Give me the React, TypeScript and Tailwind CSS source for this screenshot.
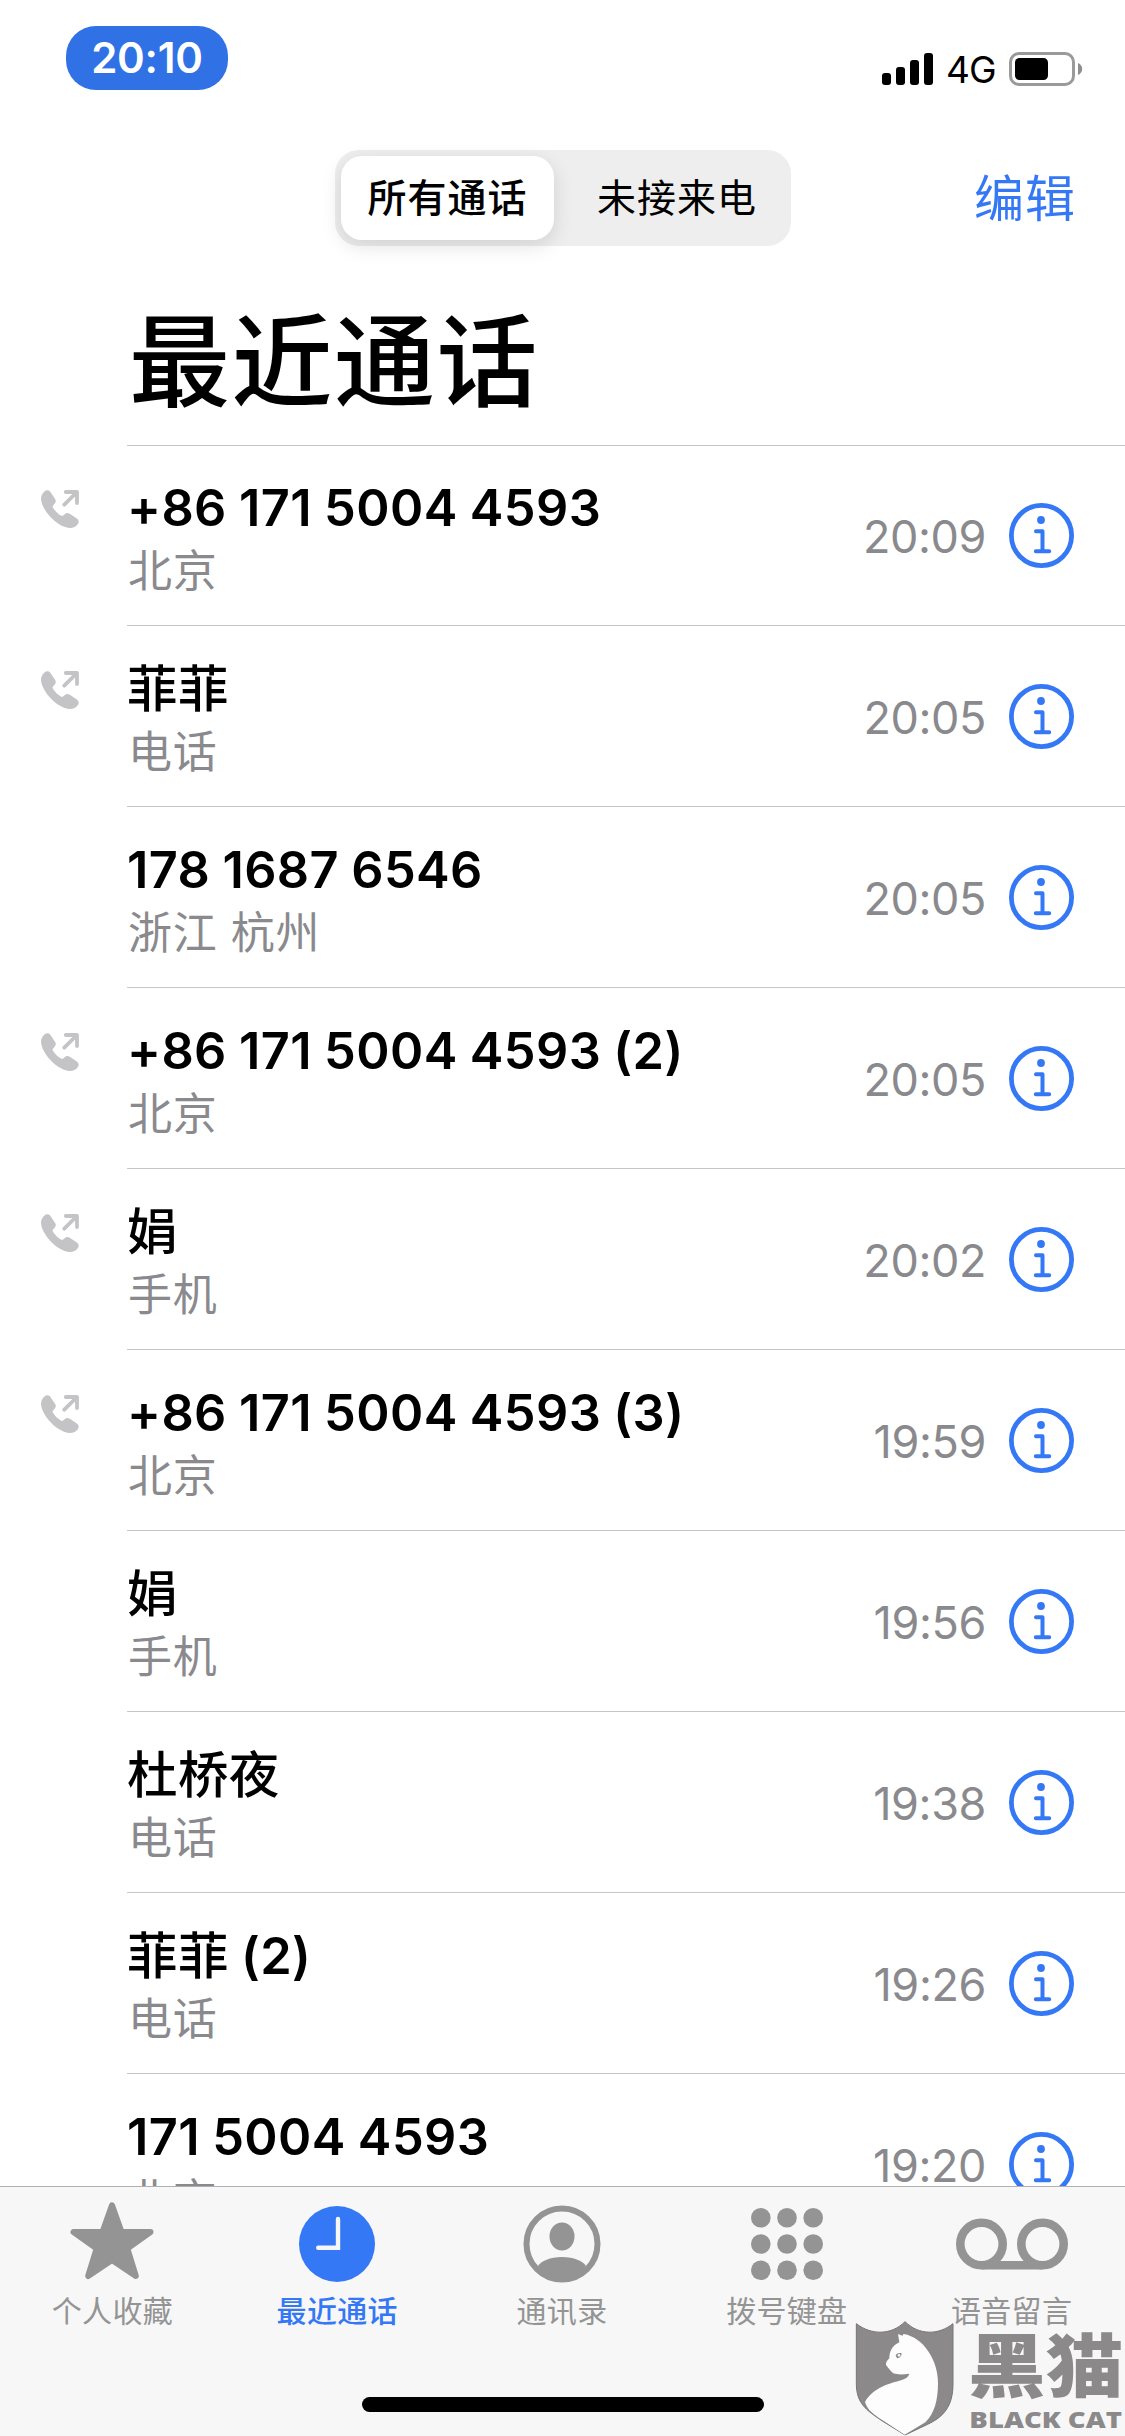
import React from 'react';
import { clsx } from 'clsx';

interface Call {
  id: number;
  name: string;
  count?: number;
  label: string;
  time: string;
  outgoing?: boolean;
}

const calls: Call[] = [
  { id: 1, name: '+86 171 5004 4593', label: '北京', time: '20:09', outgoing: true },
  { id: 2, name: '菲菲', label: '电话', time: '20:05', outgoing: true },
  { id: 3, name: '178 1687 6546', label: '浙江 杭州', time: '20:05' },
  { id: 4, name: '+86 171 5004 4593', count: 2, label: '北京', time: '20:05', outgoing: true },
  { id: 5, name: '娟', label: '手机', time: '20:02', outgoing: true },
  { id: 6, name: '+86 171 5004 4593', count: 3, label: '北京', time: '19:59', outgoing: true },
  { id: 7, name: '娟', label: '手机', time: '19:56' },
  { id: 8, name: '杜桥夜', label: '电话', time: '19:38' },
  { id: 9, name: '菲菲', count: 2, label: '电话', time: '19:26' },
  { id: 10, name: '171 5004 4593', label: '北京', time: '19:20' },
];

function StatusBar() {
  return (
    <div className="flex h-[150px] shrink-0 items-start justify-between pt-[26px] pr-[42px] pl-[66px]">
      <div className="flex h-16 w-[162px] items-center justify-center rounded-[30px] bg-[#3072e6] text-[42px] font-semibold leading-none tracking-[-0.200px] text-white">
        20:10
      </div>
      <div className="flex items-start pt-[26px]">
        <svg width="52" height="34" viewBox="0 0 52 34" className="mr-[12px]">
          <rect x="0" y="21" width="9" height="12" rx="3" />
          <rect x="14" y="15" width="9" height="18" rx="3" />
          <rect x="28" y="8" width="9" height="25" rx="3" />
          <rect x="42" y="1" width="9" height="32" rx="3" />
        </svg>
        <span className="mr-3 w-[51px] text-[37px] leading-9 tracking-tight">4G</span>
        <svg width="74" height="34" viewBox="0 0 74 34">
          <rect x="1.500" y="1.500" width="63" height="31" rx="8.500" fill="none" stroke="#9a9a9a" strokeWidth="3" />
          <rect x="6" y="6" width="33" height="22" rx="4.500" />
          <path d="M69 11c2.6 1 4.200 3.400 4.200 6s-1.600 5-4.200 6z" fill="#8e8e8e" />
        </svg>
      </div>
    </div>
  );
}

function NavBar() {
  return (
    <div className="flex h-24 shrink-0 items-center pr-[49px] pl-[335px]">
      <div className="flex h-24 w-[456px] rounded-[24px] bg-[#eeeeee] p-1.5 text-[39px] tracking-[1px]">
        <div className="flex w-[213px] items-center justify-center rounded-[21px] bg-white font-medium shadow-[0_6px_20px_rgba(0,0,0,0.12)]">
          所有通话
        </div>
        <div className="flex flex-1 items-center justify-center pl-[15px]">未接来电</div>
      </div>
      <div className="ml-auto pt-0.5 text-[50px] tracking-[1px] text-[#3478f6]">编辑</div>
    </div>
  );
}

function OutgoingIcon() {
  return (
    <svg width="38" height="38" viewBox="0 0 38 38" fill="#c4c4c6">
      <path d="M3.500 1.500C5.500-.3 8 0 9.600 2.200l4.400 6.600c1.300 2 1 3.400-.6 5.200l-1.300 1.500c-.7.8-.6 1.400-.1 2.200 1.800 3 5 6.200 7.900 7.900.9.500 1.500.5 2.200-.1l1.500-1.300c1.800-1.600 3.200-1.700 5.200-.4l6.300 4.200c2.500 1.700 3.400 3.700 1.800 6C35 37 31.500 38.200 28 37.900 15 36.500.5 19.500 0 9 0 6 1.200 3.500 3.500 1.500z" />
      <path d="M24.800 2H36v11M35.500 2.500 23.300 14.700" fill="none" stroke="#c4c4c6" strokeWidth="3.800" strokeLinecap="round" strokeLinejoin="round" />
    </svg>
  );
}

function InfoIcon() {
  return (
    <svg width="65" height="65" viewBox="0 0 65 65" fill="none" stroke="#3478f6">
      <circle cx="32.500" cy="32.500" r="30.100" strokeWidth="4.800" />
      <circle cx="32" cy="17" r="3.900" fill="#3478f6" stroke="none" />
      <path d="M27 28.300h6.500v20M26.800 48.300h13.400" strokeWidth="4" strokeLinecap="round" strokeLinejoin="round" />
    </svg>
  );
}

function CallRow({ call }: { call: Call }) {
  const isNumber = /^[+\d]/.test(call.name);

  return (
    <div className="flex h-[181px] shrink-0">
      <div className="w-[127px] shrink-0 pt-[45px] pl-[41px]">{call.outgoing && <OutgoingIcon />}</div>
      <div className="flex flex-1 border-b border-[#c6c6c8]">
        <div className="flex-1 pt-[32px]">
          <div className="h-[63px] text-[50.500px] font-semibold leading-[62px] tracking-[0.400px] whitespace-nowrap [word-spacing:-1px]">
            <span className={isNumber ? 'font-semibold' : 'font-medium'}>{call.name}</span>
            {call.count && ` (${call.count})`}
          </div>
          <div className="h-[62px] pl-px text-[44px] leading-[62px] tracking-[0.800px] text-[#8a8a8e]">{call.label}</div>
        </div>
        <div className="flex h-[181px] items-center pr-[51px]">
          <span className="mr-[23px] pt-[2px] text-[45px] leading-none tracking-[-0.400px] text-[#8a8a8e]">{call.time}</span>
          <InfoIcon />
        </div>
      </div>
    </div>
  );
}

const tabs = [
  {
    label: '个人收藏',
    icon: (
      <path d="M56 18.300 65.500 45H94.500L71.300 61.500 79.800 89 56 73 32.200 89 40.700 61.500 17.500 45H46.500z" fill="currentColor" stroke="currentColor" strokeWidth="6" strokeLinejoin="round" />
    ),
  },
  {
    label: '最近通话',
    active: true,
    icon: (
      <>
        <circle cx="56" cy="57" r="38" fill="currentColor" />
        <path d="M57 32v28.800H37.200" fill="none" stroke="#f7f7f7" strokeWidth="4.400" strokeLinecap="round" />
      </>
    ),
  },
  {
    label: '通讯录',
    icon: (
      <>
        <circle cx="56" cy="57" r="35.500" fill="none" stroke="currentColor" strokeWidth="6" />
        <ellipse cx="56" cy="49.500" rx="12.500" ry="14" fill="currentColor" />
        <path d="M32 79c3-5 12-9 24-9s21 4 24 9c-5 8-14 14-24 14s-19-6-24-14z" fill="currentColor" />
      </>
    ),
  },
  {
    label: '拨号键盘',
    icon: [30.700, 57, 83.300].map((y) =>
      [29.800, 56, 82.200].map((x) => <circle key={`${x}-${y}`} cx={x} cy={y} r="9.800" fill="currentColor" />)
    ),
  },
  {
    label: '语音留言',
    icon: (
      <g fill="none" stroke="currentColor" strokeWidth="8.600">
        <circle cx="25.500" cy="57" r="21.200" />
        <circle cx="86.500" cy="57" r="21.200" />
        <path d="M25.500 78.200h61" />
      </g>
    ),
  },
];

function TabBar() {
  return (
    <div className="flex h-[250px] shrink-0 flex-col border-t border-[#b1b1b3] bg-[#f7f7f8]">
      <div className="flex pr-[1px]">
        {tabs.map((tab) => (
          <div
            key={tab.label}
            className={clsx('flex flex-1 flex-col items-center', tab.active ? 'font-medium text-[#3478f6]' : 'text-[#949494]')}
          >
            <svg width="112" height="104" viewBox="0 0 112 104">{tab.icon}</svg>
            <span className="text-[30px] leading-10 tracking-[0.300px]">{tab.label}</span>
          </div>
        ))}
      </div>
      <div className="mx-auto mt-[66px] h-[15px] w-[402px] rounded-full bg-black" />
    </div>
  );
}

function BlackCatMark() {
  return (
    <svg width="285" height="136" viewBox="0 0 855 408" className="absolute right-0 bottom-0">
      <path d="M49 71c45 35 105 35 146-6 42 41 100 41 144 6v180c0 70-30 100-76 122l-68 32-68-42C78 330 49 310 49 250z" fill="#8b898a" stroke="#777576" strokeWidth="3" />
      <path d="M75 306c25-45 75-55 110-66 14-5 20-10 23-19-20 3-36 3-48-1-8-7-15-16-22-25-1-8 4-14 10-20 0-18 7-38 30-48l-4-25 13 5 4-5c60 10 104 80 103 148 0 50-10 90-38 117l-62 37-66-43c-28-18-45-30-53-55z" fill="#fdfdfd" />
      <path d="M167 166c3-6 10-8 17-7 2 8-4 15-13 16z" fill="#8b898a" />
      <circle cx="177" cy="166" r="4" fill="#fdfdfd" />
      <text x="384" y="275" textLength="466" lengthAdjust="spacingAndGlyphs" fontSize="208" fontWeight="900" fill="#8b898a" className="font-['Noto_Sans_CJK_SC',sans-serif]">
        黑猫
      </text>
      <text x="388" y="385" textLength="458" lengthAdjust="spacingAndGlyphs" fontSize="67" fontWeight="800" fill="#8b898a" className="font-['Open_Sans',sans-serif]">
        BLACK CAT
      </text>
    </svg>
  );
}

export default function App() {
  return (
    <div className="relative flex h-[2436px] w-[1125px] flex-col overflow-hidden bg-white font-[Inter,'Noto_Sans_CJK_SC',sans-serif] text-black">
      <StatusBar />
      <NavBar />
      <div className="flex h-[200px] shrink-0 pl-[127px]">
        <h1 className="flex-1 border-b border-[#c6c6c8] pt-[46px] pl-[2px] text-[101px] font-medium leading-[140px] tracking-[1.500px]">最近通话</h1>
      </div>
      <div className="-mt-px flex min-h-0 flex-1 flex-col overflow-hidden">
        {calls.map((call) => (
          <CallRow key={call.id} call={call} />
        ))}
      </div>
      <TabBar />
      <BlackCatMark />
    </div>
  );
}
